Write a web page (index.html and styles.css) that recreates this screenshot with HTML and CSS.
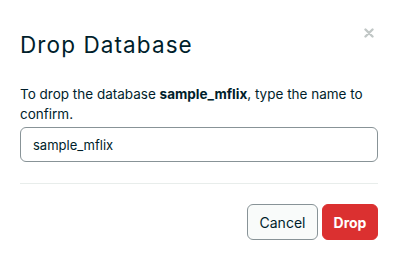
FILE: index.html
```html
<!DOCTYPE html>
<html lang="en">
<head>
  <meta charset="UTF-8">
  <title>Drop Database</title>
  <link rel="stylesheet" href="styles.css">
</head>
<body>
  <div class="modal">
    <button class="close-button" aria-label="Close">
      <svg width="10" height="10" viewBox="0 0 10 10">
        <path d="M1.5 1.5 L8.5 8.5 M8.5 1.5 L1.5 8.5" stroke="#c1c7c6" stroke-width="2.4" stroke-linecap="round"/>
      </svg>
    </button>
    <h1 class="modal-title">Drop Database</h1>
    <p class="modal-text">To drop the database <b>sample_mflix</b>, type the name to confirm.</p>
    <input class="confirm-input" type="text" value="sample_mflix">
    <div class="modal-footer">
      <button class="btn btn-cancel">Cancel</button>
      <button class="btn btn-drop">Drop</button>
    </div>
  </div>
</body>
</html>
```

FILE: styles.css
```css
* {
  margin: 0;
  padding: 0;
  box-sizing: border-box;
  font-family: Inter, 'Noto Sans', sans-serif;
}

body {
  background-color: white;
  color: #001e2b;
}

.modal {
  position: relative;
  width: 397px;
  padding: 31px 20px 0 20px;
}

.close-button {
  position: absolute;
  top: 28px;
  right: 23px;
  border: none;
  background: none;
  display: flex;
}

.modal-title {
  font-size: 22.5px;
  font-weight: 400;
  line-height: 28px;
  letter-spacing: 1.1px;
  margin-bottom: 25px;
}

.modal-text {
  font-size: 13.5px;
  line-height: 20px;
  width: 355px;
}

.modal-text b {
  font-weight: 700;
}

.confirm-input {
  display: block;
  width: 358px;
  height: 35px;
  margin-top: 3px;
  padding: 0 12px;
  border: 1px solid #889397;
  border-radius: 6px;
  font-size: 13px;
  color: #001e2b;
}

.modal-footer {
  width: 358px;
  margin-top: 21px;
  padding-top: 20px;
  border-top: 1px solid #e8edeb;
  display: flex;
  justify-content: flex-end;
  gap: 4px;
}

.btn {
  height: 36px;
  border-radius: 6px;
  font-size: 14px;
  cursor: pointer;
}

.btn-cancel {
  width: 71px;
  background-color: #f9fbfa;
  border: 1px solid #889397;
  color: #001e2b;
}

.btn-drop {
  width: 56px;
  background-color: #db3030;
  border: 1px solid #db3030;
  color: white;
  font-weight: 700;
}
```
